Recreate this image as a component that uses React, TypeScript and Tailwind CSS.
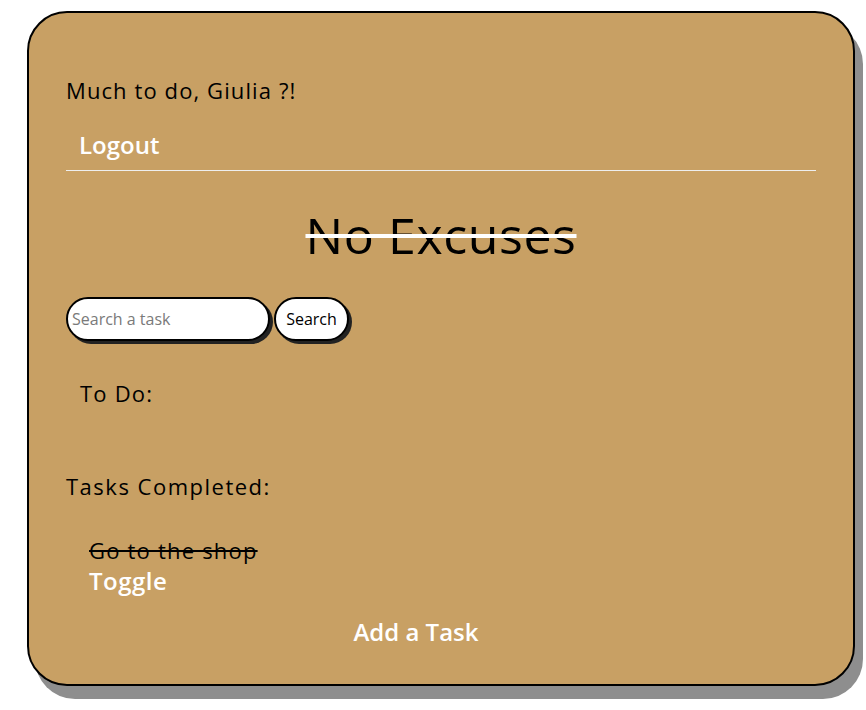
import { useState } from 'react'

const font = { fontFamily: '"Open Sans", Lato, sans-serif' }

export default function App() {
  const [query, setQuery] = useState('')

  return (
    <div className="min-h-[710px] w-full bg-white pt-[11px] pl-[27px]" style={font}>
      {/* Card */}
      <div className="w-[828px] h-[675px] bg-[#c8a064] border-2 border-black rounded-[40px] shadow-[8px_13px_0_#8e8e8e] px-[37px] flex flex-col">
        {/* Header */}
        <p className="mt-[63px] text-[22px] leading-[28px] tracking-[1.1px] text-black">Much to do, Giulia ?!</p>
        <button className="mt-[26px] self-start pl-[13px] text-[24px] leading-[30px] font-semibold text-white">
          Logout
        </button>
        <div className="mt-[10px] h-px w-[750px] bg-[#eeeeee]" />

        {/* Title */}
        <h1 className="mt-[34px] text-center text-[50px] leading-[60px] tracking-[0.6px] text-black line-through decoration-white decoration-4">
          No Excuses
        </h1>

        {/* Search */}
        <div className="mt-[32px] flex items-center gap-[4px]">
          <input
            value={query}
            onChange={e => setQuery(e.target.value)}
            placeholder="Search a task"
            className="w-[204px] h-[44px] rounded-full bg-white border-2 border-black shadow-[3px_3px_0_#222] pl-[4px] text-[16px] text-black placeholder:text-[#7a7a7a] outline-none"
          />
          <button className="w-[75px] h-[44px] rounded-full bg-white border-2 border-black shadow-[3px_3px_0_#222] text-[16px] font-medium text-black">
            Search
          </button>
        </div>

        {/* Lists */}
        <h2 className="mt-[38px] pl-[14px] text-[22px] leading-[28px] tracking-[1.2px] text-black">To Do:</h2>
        <h2 className="mt-[65px] text-[22px] leading-[28px] tracking-[1.5px] text-black">Tasks Completed:</h2>
        <div className="pl-[23px]">
          <p className="mt-[36px] text-[22px] leading-[28px] tracking-[1.2px] text-black line-through decoration-2">Go to the shop</p>
          <button className="mt-[2px] text-[24px] leading-[30px] font-semibold tracking-[0.5px] text-white">Toggle</button>
        </div>

        <button className="mt-[21px] self-center mr-[50px] text-[24px] leading-[30px] font-semibold text-white">
          Add a Task
        </button>
      </div>
    </div>
  )
}
